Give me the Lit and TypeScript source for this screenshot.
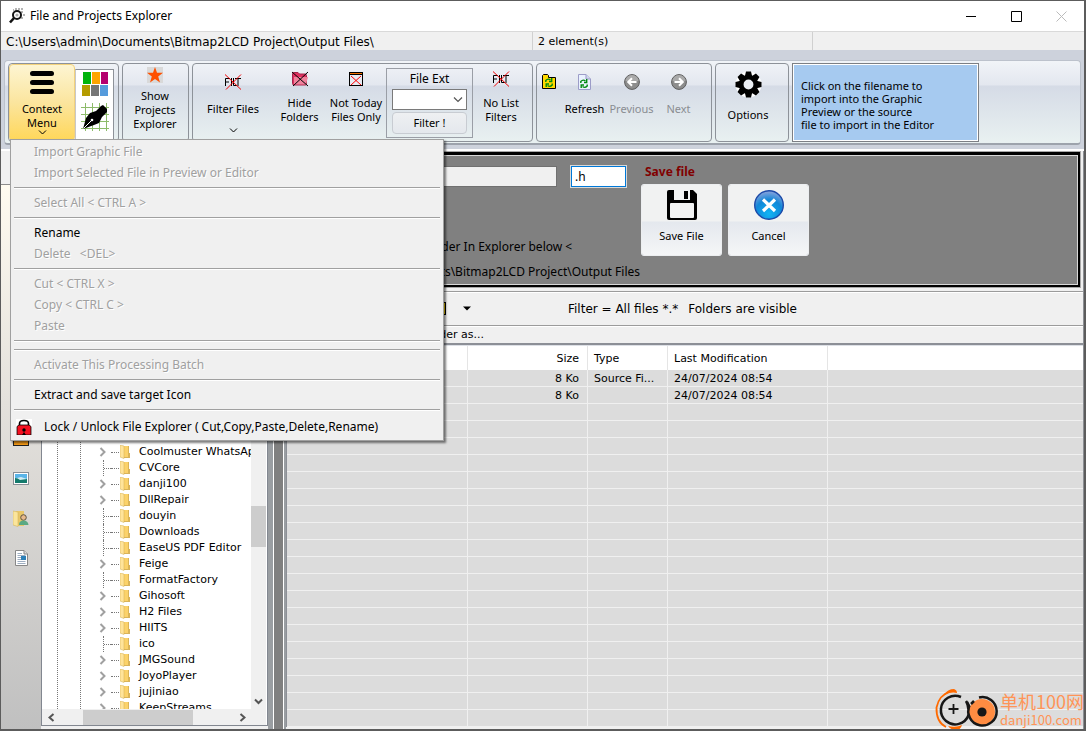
import { LitElement, html, css, svg, nothing } from "lit";
import { customElement } from "lit/decorators.js";
import { classMap } from "lit/directives/class-map.js";

type MenuEntry = "-" | { label: string; enabled?: boolean; lock?: boolean };

const MENU: MenuEntry[] = [
  { label: "Import Graphic File" },
  { label: "Import Selected File in Preview or Editor" },
  "-",
  { label: "Select All < CTRL A >" },
  "-",
  { label: "Rename", enabled: true },
  { label: "Delete   <DEL>" },
  "-",
  { label: "Cut < CTRL X >" },
  { label: "Copy < CTRL C >" },
  { label: "Paste" },
  "-",
  "-",
  { label: "Activate This Processing Batch" },
  "-",
  { label: "Extract and save target Icon", enabled: true },
  "-",
  { label: "Lock / Unlock File Explorer ( Cut,Copy,Paste,Delete,Rename)", enabled: true, lock: true },
];

const FOLDERS: [string, boolean][] = [
  ["Coolmuster WhatsApp", true],
  ["CVCore", false],
  ["danji100", true],
  ["DllRepair", true],
  ["douyin", false],
  ["Downloads", false],
  ["EaseUS PDF Editor", false],
  ["Feige", true],
  ["FormatFactory", false],
  ["Gihosoft", true],
  ["H2 Files", true],
  ["HIITS", true],
  ["ico", false],
  ["JMGSound", true],
  ["JoyoPlayer", true],
  ["jujiniao", true],
  ["KeepStreams", true],
];

const FILES = [
  { size: "8 Ko", type: "Source Fi...", date: "24/07/2024 08:54" },
  { size: "8 Ko", type: "", date: "24/07/2024 08:54" },
];

const EMPTY_ROWS = 19;

const appIcon = svg`<svg width="16" height="16" viewBox="0 0 16 16">
  <g fill="#b4b4b4"><path d="M6 0h2v2H6zM9 0h2v2H9zM12 0h2v2h-2zM12 3h2v2h-2zM14 6h2v2h-2zM12 9h2v2h-2zM4 1h1v2H4z"/></g>
  <circle cx="8" cy="7" r="4" fill="#fff" stroke="#111" stroke-width="2"/>
  <circle cx="8" cy="7" r="1.6" fill="#aaa"/><path d="M5 10 1 14.500" stroke="#111" stroke-width="2.600"/></svg>`;

const burger = svg`<svg width="24" height="23" viewBox="0 0 24 23"><g fill="#000">
  <rect y="0" width="24" height="5" rx="2.5"/><rect y="9" width="24" height="5" rx="2.5"/><rect y="18" width="24" height="5" rx="2.5"/></g></svg>`;

const palette = svg`<svg width="28" height="27" viewBox="0 0 28 27"><rect width="28" height="27" fill="#fff"/>
  <rect x="2" y="1" width="8" height="12" fill="#00b30c"/><rect x="11" y="1" width="8" height="12" fill="#ffa500"/><rect x="20" y="1" width="7" height="12" fill="#b4006e"/>
  <rect x="1" y="14" width="8" height="11" fill="#b49b00"/><rect x="10" y="14" width="8" height="11" fill="#767676"/><rect x="19" y="14" width="8" height="11" fill="#559bdc"/></svg>`;

const pen = svg`<svg width="28" height="28" viewBox="0 0 28 28"><rect width="28" height="28" fill="#fff"/>
  <path d="M4.500 0v28M11.500 0v28M18.500 0v28M25.500 0v28M0 4.500h28M0 11.500h28M0 18.500h28M0 25.500h28" stroke="#8dbb6a"/>
  <path d="M2 26 5 15 9 10 15 8 20 3 22 2 26 6 26 9 21 14 18 20 13 22Z" fill="#000"/>
  <path d="m2.500 25.500 8-8" stroke="#fff" stroke-width="1"/><circle cx="11" cy="17" r="1.300" fill="#fff"/></svg>`;

const star = svg`<svg width="16" height="16" viewBox="0 0 16 16"><rect width="16" height="16" fill="#d9d9d9"/>
  <path d="M8 0l2 5.700h6l-4.800 3.700 1.800 6L8 11.900 3 15.400l1.800-6L0 5.700h6z" fill="#ff5000"/></svg>`;

const filt = svg`<svg width="18" height="16" viewBox="0 0 18 16" fill="none">
  <path d="M1.500 12V4.500H6M1.500 8H5M7.500 4v8M9.500 4v7.500H13M11 4.500h6M14 4.500V12" stroke="#000"/>
  <path d="M1 .5l16 15M17 .5 2 15.500" stroke="#f00000"/></svg>`;

const hideFolder = svg`<svg width="18" height="16" viewBox="0 0 18 16"><path d="M1.500 2.500q0-1 1-1H7l1.500 1.500H14q1.500 0 1.500 1.500V13q0 1-1 1H3q-1.500 0-1.500-1.500z" fill="#e0305f" stroke="#a3254a"/>
  <path d="M3 6h14l-2 7.500H3z" fill="#f0829c"/><path d="M1 1l16 14M17 1 2 15" stroke="#000"/></svg>`;

const notToday = svg`<svg width="14" height="16" viewBox="0 -1 14 16"><rect x=".5" y=".5" width="13" height="13" fill="#e8eaf2" stroke="#000"/>
  <path d="M1 1.500h12" stroke="#f07000"/><path d="M0 2.500h14" stroke="#000"/><path d="m2 4 10 9M12 4 2 13" stroke="#f00"/></svg>`;

const recycle = (x: number, y: number) => svg`<g transform="translate(${x} ${y})" fill="none" stroke="#008a10" stroke-width="1.400">
  <path d="M.8 4V2.500Q3 0 5.500 2M6.700 0v3.500H4"/><path d="M7.200 5.500V7Q5 9.500 2.500 7.500M1.200 9V6H4"/></g>`;

const folderRefresh = svg`<svg width="14" height="15" viewBox="0 0 14 15"><path d="M.5 1.500V14.500h13V3.500H6.500v-2l-1-1h-4z" fill="#ffd800" stroke="#000"/>${recycle(3, 4)}</svg>`;
const pageRefresh = svg`<svg width="13" height="16" viewBox="0 0 13 16"><path d="M.5.500H8l4.500 4.500v10.500H.5z" fill="#eaf2ff" stroke="#9c9cc8"/><path d="M8 .5V5h4.500" fill="#cfd6ee" stroke="#9c9cc8"/>${recycle(2, 5)}</svg>`;

const navArrow = (right: boolean) => svg`<svg width="16" height="16" viewBox="0 0 16 16"><circle cx="8" cy="8" r="7.400" fill="#8d8d8d" stroke="#5c5c5c"/>
  <path d="M1.500 7a6.500 6 0 0 1 13 0z" fill="#aaa"/>
  <path d=${right ? "M3.500 8h8M8 4.200 11.800 8 8 11.800" : "M12.500 8h-8M8 4.200 4.200 8 8 11.800"} fill="none" stroke="#fff" stroke-width="2"/></svg>`;

const gear = svg`<svg width="27" height="27" viewBox="0 0 27 27"><circle cx="13.500" cy="13.500" r="11" fill="none" stroke="#fff" stroke-width="4"/>
  <g fill="#000">${[0, 45, 90, 135].map((a) => svg`<path d="M11 .5h5l1.200 5h-7.400zM11 26.500h5l1.200-5h-7.400z" transform="rotate(${a} 13.500 13.500)"/>`)}</g>
  <circle cx="13.500" cy="13.500" r="7.200" fill="#eceff4" stroke="#000" stroke-width="4.500"/></svg>`;

const floppy = svg`<svg width="30" height="30" viewBox="0 0 30 30"><path d="M0 2Q0 0 2 0h24l4 4v24q0 2-2 2H2q-2 0-2-2z" fill="#000"/>
  <rect x="7" y="0" width="16" height="10" fill="#f2f3f3"/><rect x="17" y="1" width="4" height="8" fill="#000"/><rect x="3" y="13" width="24" height="15" rx="1" fill="#f2f3f3"/></svg>`;

const cancelIcon = svg`<svg width="30" height="30" viewBox="0 0 30 30"><defs><radialGradient id="b" cx=".5" cy=".8" r=".8"><stop offset="0" stop-color="#12b4f4"/><stop offset=".6" stop-color="#1187d8"/><stop offset="1" stop-color="#8fa4dc"/></radialGradient></defs>
  <circle cx="15" cy="15" r="14.300" fill="url(#b)" stroke="#1c4aa8" stroke-width="1.400"/><path d="m9 9.500 12 11.500M21 9.500 9 21" stroke="#fff" stroke-width="3.200"/></svg>`;

const lockIcon = svg`<svg width="16" height="16" viewBox="0 0 16 16"><rect width="16" height="16" fill="#fff"/><path d="M3.500 7V4.500Q3.500 1.500 8 1.500t4.500 3V7" fill="none" stroke="#000" stroke-width="1.600"/>
  <path d="M1 7.500 3 6h10l2 1.500V16H1z" fill="#f51020" stroke="#000" stroke-width=".8"/><circle cx="8" cy="11" r="1.700" fill="#000"/><path d="M6 16l2-3 2 3z"/></svg>`;

const folder = svg`<svg width="10" height="14" viewBox="0 0 10 14"><path d="M3 1h6v7h1v5H3z" fill="#d9b45a"/><path d="M4 1h4v11H4z" fill="#fbd26a"/><path d="M0 0l4 1v12.500L0 12z" fill="#ffe49a" stroke="#d0ac52" stroke-width=".5"/></svg>`;

const chev = (d: string, w: number, h: number, c: string, sw: number) =>
  svg`<svg width=${w} height=${h} viewBox="0 0 ${w} ${h}"><path d=${d} fill="none" stroke=${c} stroke-width=${sw}/></svg>`;
const smallDown = chev("M1 .5 4.500 4 8 .5", 9, 5, "#000", 1);

const desktopIcon = svg`<svg width="16" height="16" viewBox="0 0 16 16"><rect x=".5" y=".5" width="15" height="15" fill="#f59a17" stroke="#222"/></svg>`;
const pictureIcon = svg`<svg width="16" height="13" viewBox="0 0 16 13"><rect x=".5" y=".5" width="15" height="12" fill="#fff" stroke="#8a8f96"/><rect x="2" y="2" width="12" height="9" fill="#5ab4e8"/><path d="M2 6.500 8 5l6 2v2H2z" fill="#d2ecf2"/><path d="M2 6q3 0 5 2l7-1v4H2z" fill="#147a6c"/></svg>`;
const userFolder = svg`<svg width="16" height="17" viewBox="0 0 16 17"><path d="M3 1h8v15H3z" fill="#e9c768"/><path d="M0 1l5 1v14.500L0 15z" fill="#fbe59b" stroke="#cfae55" stroke-width=".5"/><circle cx="10.500" cy="7.500" r="2.800" fill="#e6b98c" stroke="#5d5343"/><path d="M6 15q0-4.500 4.500-4.500T15.500 15z" fill="#5aa984"/></svg>`;
const docIcon = svg`<svg width="13" height="16" viewBox="0 0 13 16"><path d="M.5.500H9l3.500 3.500v11.500H.5z" fill="#fff" stroke="#888"/><path d="M9 .5V4h3.500" fill="#ddd" stroke="#888"/><path d="M2.500 3.500H7M2.500 5.500h8M2.500 7.500H6M2.500 9.500H6M2.500 11.500h8M2.500 13.500h8" stroke="#9dadc0"/><rect x="6" y="6" width="5" height="4" fill="#2c80b8"/></svg>`;

const brand = svg`<svg width="64" height="42" viewBox="0 0 64 42" fill="none">
  <path d="M16 2Q4 6 1.500 18.500 1 33 11 38" stroke="#ff6a00" stroke-width="1.800"/><path d="M10 5Q13 0 19 0 22 1 22 4 16 2.500 10 6zM13 37q8 2 14-1-1 4-5 5.500Q16 41 13 37z" fill="#ff6a00"/>
  <path d="M26 8A14.300 14.300 0 1 0 32 13" stroke="#171717" stroke-width="2.500"/><path d="M18.500 15v10M13.500 20h10" stroke="#171717" stroke-width="1.800"/>
  <circle cx="47" cy="23" r="13" fill="#ff8c42"/><path d="M44 8.500A14.200 14.200 0 1 1 34.500 16.500M31 12q2 3 2.500 9M39 12l-3 3" stroke="#171717" stroke-width="2.500"/><circle cx="47" cy="23" r="4.600" fill="#171717"/></svg>`;

@customElement("app-root")
export class AppRoot extends LitElement {
  static styles = css`
    :host {
      display: flex;
      flex-direction: column;
      position: relative;
      box-sizing: border-box;
      height: 100vh;
      min-height: 640px;
      overflow: hidden;
      border: 1px solid #5c5c5c;
      border-width: 1px 2px 2px 1px;
      background: #f0f0f0;
      color: #000;
      font: 11px/14px "DejaVu Sans", Verdana, sans-serif;
    }
    * { box-sizing: border-box; }
    svg { display: block; flex: none; }
    button, input, select { font: inherit; color: inherit; margin: 0; padding: 0; border: 0; background: none; }
    .ui { font-family: "Noto Sans", Tahoma, sans-serif; }

    .title { display: flex; align-items: center; height: 30px; background: #fff; padding: 0 8px; gap: 5px; flex: none; }
    .title h1 { flex: 1; margin: 0; font: 12px/16px "Noto Sans", sans-serif; }
    .caption { display: flex; gap: 15px; }
    .caption button { width: 30px; height: 28px; display: grid; place-items: center; }

    .path { display: flex; height: 19px; flex: none; border-top: 1px solid #d9d9d9; line-height: 20px; }
    .path span { padding: 0 5px; border-right: 1px solid #d0d0d0; white-space: nowrap; }
    .path .where { width: 532px; font-size: 12px; }
    .path .count { width: 280px; }

    .ribbon { flex: none; height: 99px; padding: 10px 3px 4px; background: #cdd2dc; }
    .tray {
      display: flex; gap: 3px; height: 85px; padding: 2px 3px 3px;
      border: 1px solid #bcc2cc; border-bottom: 2px solid #9da3ac; border-radius: 4px;
      background: linear-gradient(#f1f4f8, #e3e7ef 24px, #d5dbe6 25px, #e9f1f1);
    }
    .group { display: flex; height: 79px; border: 1px solid #8d9299; border-radius: 4px; flex: none; }
    .g1 { width: 111px; } .g2 { width: 67px; } .g3 { width: 341px; } .g4 { width: 176px; } .g5 { width: 74px; }
    .tool { display: flex; flex-direction: column; align-items: center; white-space: pre; text-align: center; gap: 9px; padding-top: 7px; flex: none; }
    .tool.low { padding-top: 10px; gap: 12px; }
    .tool.tight { padding-top: 3px; gap: 6px; }
    .tool.big { gap: 10px; }
    .tool:disabled { color: #8a8d92; }
    .w24 { width: 24px; } .w47 { width: 47px; } .w53 { width: 53px; } .w56 { width: 56px; } .w60 { width: 60px; } .w64 { width: 64px; } .w80 { width: 80px; }
    .menuBtn { padding-top: 6px; gap: 8px; width: 66px; border: 1px solid #f3d27c; border-radius: 4px; background: linear-gradient(#fdf5d2, #fbe59e 50%, #ffd75a); }
    .menuBtn .label { display: flex; flex-direction: column; align-items: center; }
    .pair { margin-top: 5px; padding: 1px 5px; width: 39px; border: 1px solid #8d9299; border-left-color: #c8c8c8; background: #fff; display: flex; flex-direction: column; gap: 5px; align-items: center; }
    .pair button { background: #fff; }
    .ext { width: 87px; height: 70px; margin-top: 4px; padding: 2px 5px; border: 1px solid #9a9ea6; display: flex; flex-direction: column; font-size: 12px; gap: 2px; }
    .ext label { text-align: center; line-height: 16px; }
    .combo { display: flex; align-items: center; height: 21px; border: 1px solid #7a7a7a; background: #fff; padding-right: 3px; }
    .combo select { flex: 1; min-width: 0; height: 19px; appearance: none; }
    .go { height: 22px; border: 1px solid #c8ccd2; border-radius: 4px; background: linear-gradient(#eef0f2, #e4e8ed); font-size: 11px; }
    .hint { width: 187px; height: 79px; border: 1px solid #7c7f84; outline: 1px solid #fff; outline-offset: -2px; background: #a6caf0; padding: 15px 8px 0; line-height: 13px; margin: 0; white-space: pre; flex: none; }

    .body { flex: 1; min-height: 0; display: flex; border-top: 2px solid #fff; }
    .left { width: 267px; flex: none; display: flex; flex-direction: column; }
    .leftHead { height: 34px; border-bottom: 1px solid #8c8c8c; flex: none; }
    .leftBody { flex: 1; min-height: 0; display: flex; }
    .side { width: 40px; flex: none; display: flex; flex-direction: column; align-items: center; padding-top: 233px; background: linear-gradient(#fffbf0, #e4e1dc 40%, #c0c0c0); overflow: hidden; }
    .side button { width: 38px; height: 40px; flex: none; display: grid; place-items: center; }
    .tree { flex: 1; min-width: 0; display: grid; grid-template: minmax(0, 1fr) 16px / minmax(0, 1fr) 15px; margin-bottom: 3px; padding-right: 1px; border: 1px solid #828790; background: #fff; }
    .nodes { margin: 0; padding: 258px 0 0; list-style: none; overflow: hidden;
      background: repeating-linear-gradient(#777 0 1px, #fff 1px 2px) 15px 0 / 1px 100% no-repeat, repeating-linear-gradient(#777 0 1px, #fff 1px 2px) 38px 0 / 1px 100% no-repeat; }
    .nodes li { display: flex; align-items: center; height: 16px; padding-left: 57px; white-space: nowrap; }
    .twig { width: 12px; height: 16px; flex: none; display: flex; align-items: center; }
    .twig.leaf { border-left: 1px dotted #777; margin-left: 4px; width: 8px; }
    .twig.leaf::before { content: ""; flex: 1; border-top: 1px dotted #777; }
    .stem { width: 8px; border-top: 1px dotted #777; flex: none; }
    .nodes span { margin-left: 9px; flex: none; }
    .stem + svg { margin-left: 1px; }
    .vbar { background: #f0f0f0; display: flex; flex-direction: column; align-items: center; padding-bottom: 4px; }
    .vbar i { width: 15px; height: 41px; background: #cdcdcd; margin-top: auto; margin-bottom: 151px; }
    .hbar { grid-column: 1 / -1; background: #f0f0f0; display: flex; align-items: center; padding: 0 20px 0 6px; gap: 28px; }
    .hbar i { width: 110px; height: 15px; background: #cdcdcd; }
    .hbar svg:last-child { margin-left: auto; }
    .split { width: 18px; flex: none; background: #808080; border: solid #9a9ea2; border-width: 0 2px 0 5px; box-shadow: inset 1px 0 #fff, inset -1px 0 #fff; }

    .right { flex: 1; min-width: 0; display: flex; flex-direction: column; border-right: 1px solid #8c8f94; }
    .save { flex: none; display: flex; height: 135px; margin: 1px 3px 4px 0; padding: 10px 0 0 2px; background: #808080; border: 2px solid #000; border-top-width: 3px; outline: 1px solid #a8a8a8; box-shadow: inset 0 0 0 1px #d8d8d8; }
    .target { width: 336px; display: flex; flex-direction: column; font-size: 12px; }
    .names { display: flex; gap: 14px; margin: 1px 0 53px; }
    .names input { height: 21px; min-width: 0; }
    .names .name { flex: 1; background: #f0f0f0; border: 1px solid #707070; }
    .names .suffix { width: 55px; background: #fff; border: 1px solid #0078d7; outline: 1px solid #d8d8d8; padding-left: 3px; }
    .target p { margin: 0 0 11px; white-space: nowrap; }
    .target p + p { align-self: flex-end; margin-right: -14px; }
    .actions { margin-left: 15px; }
    .actions h2 { margin: 0 4px 5px; font-size: 12px; line-height: 14px; color: #800000; }
    .row { display: flex; gap: 6px; }
    .row button { width: 81px; height: 72px; display: flex; flex-direction: column; align-items: center; gap: 9px; padding-top: 5px; border: 1px solid #c4c6cc; border-radius: 3px; outline: 1px solid #eceef0; outline-offset: -1px; background: linear-gradient(#f1f2f2 36px, #e4e8ee 37px, #f5f6f7); }
    .bar { flex: none; height: 35px; border: solid #9b9b9b; border-width: 1px 0; box-shadow: inset 0 1px #fff; display: flex; align-items: center; padding-left: 156px; font-size: 12px; }
    .bar .arrow { margin-left: 17px; margin-right: 97px; }
    .bar span { margin-right: 10px; }
    .as { flex: none; height: 19px; padding-left: 109px; line-height: 16px; border-bottom: 2px solid #8c8f96; border-top: 1px solid #fff; }
    .list { flex: 1; min-height: 0; overflow: hidden; background: #dcdcdc; border-left: 1px solid #8c8f96; border-top: 1px solid #dde0e6; margin-bottom: 2px; }
    table { width: 100%; border-collapse: separate; border-spacing: 0; table-layout: fixed; }
    th { height: 24px; background: #fff; border-right: 1px solid #e5e5e5; font-weight: 400; text-align: left; padding: 2px 6px 0; }
    td { height: 17px; padding: 2px 6px 0; border: solid #f0f0f0; border-width: 0 1px 1px 0; white-space: nowrap; }
    .num { text-align: right; padding-right: 8px; }
    th:last-child, td:last-child { border-right: 0; }
    .c1 { width: 181px; } .c2 { width: 120px; } .c3 { width: 80px; } .c4 { width: 160px; }

    .menu { position: absolute; left: 9px; top: 138px; width: 434px; margin: 0; padding: 1px 3px; border: 1px solid #a0a0a0; background: #f0f0f0; box-shadow: 2px 2px 2px rgba(0, 0, 0, 0.5); display: flex; flex-direction: column; font-size: 12px; }
    .menu hr { margin: 4px 0 3px; border: 0; border-top: 1px solid #a0a0a0; border-bottom: 1px solid #fff; width: 100%; }
    .menu button { height: 21px; display: flex; align-items: center; padding-left: 20px; white-space: pre; }
    .menu button:disabled { color: #a0a0a0; text-shadow: 1px 1px #fff; }
    .menu button.lock { height: 25px; padding-left: 2px; gap: 12px; }

    .brand { position: absolute; right: 0; bottom: -2px; display: flex; color: #ff9457; gap: 1px; pointer-events: none; font-family: "Noto Sans CJK SC", sans-serif; }
    .brand div { display: flex; flex-direction: column; padding-top: 2px; }
    .brand b { font-weight: 400; font-size: 18px; line-height: 20px; }
    .brand small { font-size: 13px; line-height: 18px; }
  `;

  private tool(cls: string, icon: unknown, label: string, opts: { off?: boolean; drop?: boolean } = {}) {
    return html`<button class="tool ${cls}" ?disabled=${opts.off}>${icon}${label}${opts.drop ? smallDown : nothing}</button>`;
  }

  private ribbon() {
    return html`<nav class="ribbon ui"><div class="tray">
      <div class="group g1">
        <button class="tool menuBtn" aria-haspopup="menu" aria-expanded="true">${burger}<span class="label">${"Context\nMenu"}${smallDown}</span></button>
        <div class="pair"><button aria-label="Palette">${palette}</button><button aria-label="Draw">${pen}</button></div>
      </div>
      <div class="group g2">${this.tool("tight w64", star, "Show\nProjects\nExplorer")}</div>
      <div class="group g3">
        ${this.tool("low w80", filt, "Filter Files", { drop: true })}
        ${this.tool("w53", hideFolder, "Hide\nFolders")}
        ${this.tool("w60", notToday, "Not Today\nFiles Only")}
        <div class="ext">
          <label for="ext">File Ext</label>
          <div class="combo"><select id="ext"><option></option></select>${chev("M1 1.500 5 5.500 9 1.500", 10, 7, "#555", 1.2)}</div>
          <button class="go">Filter !</button>
        </div>
        ${this.tool("w56", filt, "No List\nFilters")}
      </div>
      <div class="group g4">
        <button class="tool low w24" aria-label="Refresh folder">${folderRefresh}</button>
        ${this.tool("low w47", pageRefresh, "Refresh")}
        ${this.tool("low w47", navArrow(false), "Previous", { off: true })}
        ${this.tool("low w47", navArrow(true), "Next", { off: true })}
      </div>
      <div class="group g5">${this.tool("big w64", gear, "Options")}</div>
      <p class="hint">${"Click on the filename to\nimport into the Graphic\nPreview or the source\nfile to import in the Editor"}</p>
    </div></nav>`;
  }

  private tree() {
    return html`<div class="tree">
      <ul class="nodes">
        ${FOLDERS.map(([name, open]) => html`<li>
          <div class=${classMap({ twig: true, leaf: !open })}>${open ? chev("M1.500 1 5.500 5 1.500 9", 7, 10, "#a0a0a0", 2) : nothing}</div>
          <div class="stem"></div>${folder}<span>${name}</span></li>`)}
      </ul>
      <div class="vbar"><i></i>${chev("M1 1.500 4.500 5 8 1.500", 9, 7, "#555", 2)}</div>
      <div class="hbar">${chev("M5.500 1 1.500 4.500 5.500 8", 7, 9, "#555", 2)}<i></i>${chev("M1.500 1 5.500 4.500 1.500 8", 7, 9, "#555", 2)}</div>
    </div>`;
  }

  render() {
    return html`
      <header class="title">${appIcon}<h1>File and Projects Explorer</h1>
        <div class="caption">
          <button aria-label="Minimize">${chev("M0 .5h10", 10, 1, "#000", 1)}</button>
          <button aria-label="Maximize">${chev("M.5.500h10v10H.5z", 11, 11, "#000", 1)}</button>
          <button aria-label="Close" disabled>${chev("M.5.500l10 10M10.500.500l-10 10", 11, 11, "#bbb", 1)}</button>
        </div>
      </header>
      <div class="path"><span class="where">C:\\Users\\admin\\Documents\\Bitmap2LCD Project\\Output Files\\</span><span class="count">2 element(s)</span></div>
      ${this.ribbon()}
      <main class="body">
        <section class="left">
          <div class="leftHead"></div>
          <div class="leftBody">
            <div class="side">
              <button aria-label="Desktop">${desktopIcon}</button><button aria-label="Pictures">${pictureIcon}</button>
              <button aria-label="User folder">${userFolder}</button><button aria-label="Documents">${docIcon}</button>
            </div>
            ${this.tree()}
          </div>
        </section>
        <div class="split"></div>
        <section class="right">
          <form class="save ui" @submit=${(e: Event) => e.preventDefault()}>
            <div class="target">
              <div class="names"><input class="name" aria-label="File name" readonly /><input class="suffix" aria-label="Extension" value=".h" /></div>
              <p>&gt; Select the destination Folder In Explorer below &lt;</p>
              <p>C:\\Users\\admin\\Documents\\Bitmap2LCD Project\\Output Files</p>
            </div>
            <div class="actions">
              <h2>Save file</h2>
              <div class="row"><button>${floppy}Save File</button><button type="button">${cancelIcon}Cancel</button></div>
            </div>
          </form>
          <div class="bar"><svg width="4" height="13"><path d="M0 0h4v13H0z" /><path d="M0 1h3v11H0z" fill="#ffd800" /></svg>
            <svg class="arrow" width="8" height="5"><path d="M0 .5h8L4 4.500z" /></svg>
            <span>Filter = All files *.*</span><span>Folders are visible</span></div>
          <div class="as">Save folder as...</div>
          <div class="list"><table>
            <colgroup><col class="c1" /><col class="c2" /><col class="c3" /><col class="c4" /><col /></colgroup>
            <thead><tr><th></th><th class="num">Size</th><th>Type</th><th>Last Modification</th><th></th></tr></thead>
            <tbody>
              ${FILES.map((f) => html`<tr><td></td><td class="num">${f.size}</td><td>${f.type}</td><td>${f.date}</td><td></td></tr>`)}
              ${Array.from({ length: EMPTY_ROWS }, () => html`<tr><td></td><td></td><td></td><td></td><td></td></tr>`)}
            </tbody>
          </table></div>
        </section>
      </main>
      <div class="menu ui" role="menu">
        ${MENU.map((m) => m === "-" ? html`<hr />` : html`<button role="menuitem" class=${classMap({ lock: !!m.lock })} ?disabled=${!m.enabled}>${m.lock ? lockIcon : nothing}${m.label}</button>`)}
      </div>
      <div class="brand">${brand}<div><b>单机100网</b><small>danji100.com</small></div></div>
    `;
  }
}
